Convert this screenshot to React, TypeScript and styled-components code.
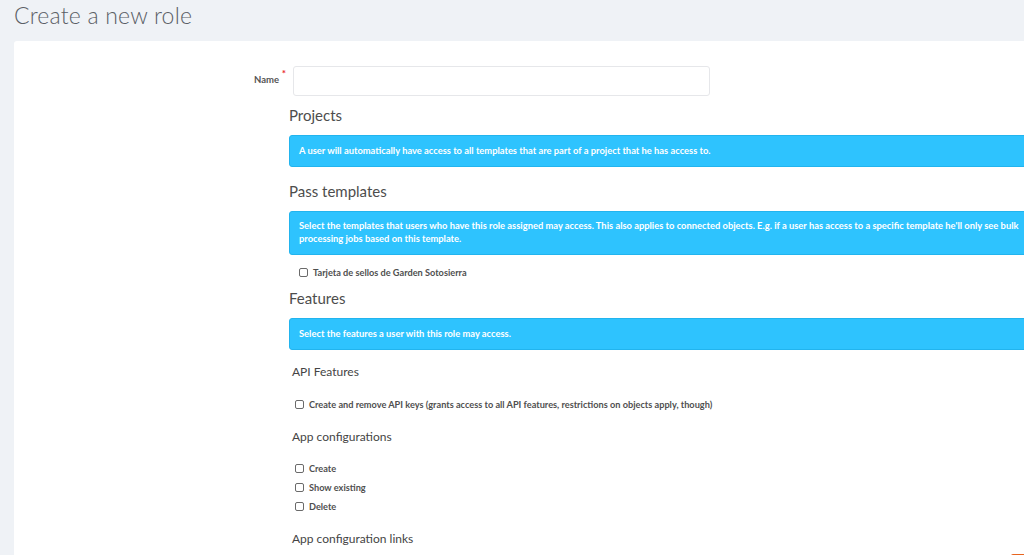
import styled, { createGlobalStyle } from 'styled-components';

const GlobalStyle = createGlobalStyle`
  html, body {
    margin: 0;
    padding: 0;
    background: #eff2f6;
    overflow: hidden;
    font-family: Lato, "Open Sans", sans-serif;
    color: #4a4a4a;
  }
`;

const Page = styled.div`
  padding: 0 0 0 14px;
  height: 555px;
  overflow: hidden;
`;

const Title = styled.h1`
  margin: 0;
  padding-top: 1px;
  height: 40px;
  font-size: 23px;
  font-weight: 300;
  color: #5b5f66;
  line-height: 28px;
  letter-spacing: 0.2px;
`;

const Card = styled.div`
  background: #fff;
  width: 1100px;
  min-height: 600px;
  border-radius: 3px 0 0 0;
  padding-top: 25px;
`;

const FormRow = styled.div`
  display: grid;
  grid-template-columns: 275px 1fr;
  align-items: center;
`;

const Label = styled.label`
  text-align: right;
  padding-right: 10px;
  font-size: 9.5px;
  font-weight: 700;
  color: #555;
  position: relative;
  top: -2px;
`;

const Required = styled.span`
  position: absolute;
  right: 3px;
  top: -7px;
  color: #e8262b;
  font-size: 10px;
`;

const Input = styled.input`
  margin-left: 4px;
  width: 417px;
  height: 30px;
  box-sizing: border-box;
  border: 1px solid #e6e7ea;
  border-radius: 3px;
  outline: none;
`;

const Content = styled.div`
  margin-left: 275px;
`;

const SectionTitle = styled.h2<{ $top: number }>`
  margin: 0;
  font-size: 15px;
  font-weight: 400;
  color: #4d4d4d;
  line-height: 20px;
  padding: ${({ $top }) => $top}px 0 10px;
`;

const Alert = styled.div<{ $lh?: number }>`
  background: #2ec3fe;
  border: 1px solid #22b4ee;
  border-radius: 3px;
  color: #fff;
  font-size: 9.35px;
  font-weight: 700;
  line-height: ${({ $lh }) => $lh ?? 13}px;
  padding: 8px 9px 9px;
  margin-right: -100px;
`;

const CheckList = styled.div<{ $indent: number; $top: number }>`
  display: flex;
  flex-direction: column;
  gap: 6px;
  padding: ${({ $top }) => $top}px 0 0 ${({ $indent }) => $indent}px;
`;

const CheckRow = styled.label`
  display: flex;
  align-items: center;
  gap: 5px;
  font-size: 9.2px;
  font-weight: 700;
  color: #4f4f4f;
  height: 13px;
`;

const Box = styled.input`
  appearance: none;
  margin: 0;
  width: 9px;
  height: 9px;
  border: 1px solid #6a6a6a;
  border-radius: 2px;
  background: #fff;
`;

const SubTitle = styled.h3<{ $top: number }>`
  margin: 0;
  padding: ${({ $top }) => $top}px 0 0 3px;
  font-size: 12px;
  font-weight: 400;
  color: #444;
  line-height: 20px;
`;

const Floating = styled.div`
  position: fixed;
  right: 0;
  bottom: -1px;
  width: 13px;
  height: 2px;
  background: #e8651f;
  border-radius: 2px 0 0 0;
`;

function Check({ label }: { label: string }) {
  return (
    <CheckRow>
      <Box type="checkbox" />
      {label}
    </CheckRow>
  );
}

export default function App() {
  return (
    <Page>
      <GlobalStyle />
      <Title>Create a new role</Title>
      <Card>
        <FormRow>
          <Label>
            Name
            <Required>*</Required>
          </Label>
          <Input type="text" />
        </FormRow>
        <Content>
          <SectionTitle $top={9}>Projects</SectionTitle>
          <Alert>A user will automatically have access to all templates that are part of a project that he has access to.</Alert>

          <SectionTitle $top={14}>Pass templates</SectionTitle>
          <Alert $lh={12.5}>
            Select the templates that users who have this role assigned may access. This also applies to connected objects. E.g. if a user has access to a specific template he'll only see bulk
            <br />
            processing jobs based on this template.
          </Alert>
          <CheckList $indent={10} $top={11}>
            <Check label="Tarjeta de sellos de Garden Sotosierra" />
          </CheckList>

          <SectionTitle $top={9}>Features</SectionTitle>
          <Alert>Select the features a user with this role may access.</Alert>

          <SubTitle $top={12}>API Features</SubTitle>
          <CheckList $indent={6} $top={16}>
            <Check label="Create and remove API keys (grants access to all API features, restrictions on objects apply, though)" />
          </CheckList>

          <SubTitle $top={16}>App configurations</SubTitle>
          <CheckList $indent={6} $top={15}>
            <Check label="Create" />
            <Check label="Show existing" />
            <Check label="Delete" />
          </CheckList>

          <SubTitle $top={16}>App configuration links</SubTitle>
        </Content>
      </Card>
      <Floating />
    </Page>
  );
}
